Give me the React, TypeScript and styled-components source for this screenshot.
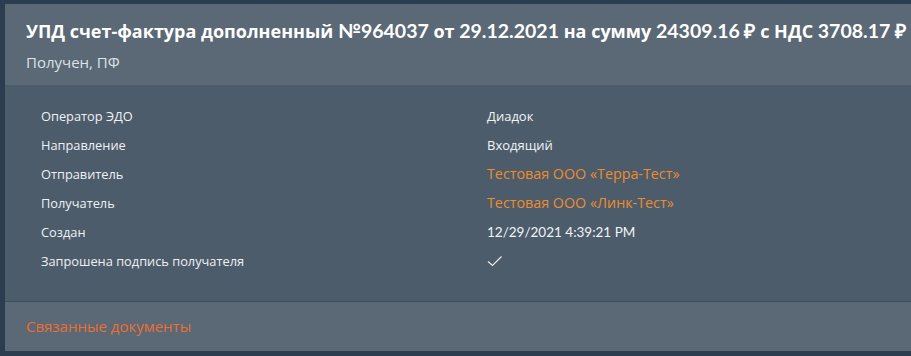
import React from "react";
import styled, { createGlobalStyle } from "styled-components";

const GlobalStyle = createGlobalStyle`
  html, body {
    margin: 0;
    padding: 0;
    background: #2c3d4f;
  }
  body {
    font-family: "Open Sans", "Noto Sans", sans-serif;
  }
`;

const Page = styled.div`
  padding: 4px 0 5px 5px;
  height: 356px;
  box-sizing: border-box;
`;

const Card = styled.div`
  display: flex;
  flex-direction: column;
  height: 100%;
`;

const Header = styled.div`
  background: #5b6876;
  padding: 15px 0 0 21px;
  height: 81px;
  box-sizing: border-box;
`;

const Title = styled.h1`
  margin: 0;
  font-size: 18px;
  font-weight: 700;
  line-height: 24px;
  color: #ffffff;
  white-space: nowrap;
`;

const Num = styled.span`
  font-family: Lato, sans-serif;
  font-weight: 700;
  font-size: 19.5px;
`;

const Subtitle = styled.div`
  margin-top: 10px;
  font-size: 15px;
  line-height: 18px;
  color: #dde2e7;
`;

const Body = styled.div`
  background: #4c5c6b;
  padding: 16px 0 0 36px;
  height: 217px;
  box-sizing: border-box;
  border-bottom: 1px solid #3e4c5a;
`;

const Grid = styled.div`
  display: grid;
  grid-template-columns: 446px 1fr;
  grid-auto-rows: 29px;
  align-items: center;
`;

const Label = styled.div`
  font-size: 12.8px;
  color: #eef1f4;
`;

const Value = styled.div<{ $link?: boolean; $latin?: boolean }>`
  font-size: ${(p) => (p.$link ? "14.3px" : p.$latin ? "13.5px" : "13px")};
  font-family: ${(p) => (p.$latin ? "Lato, sans-serif" : "inherit")};
  color: ${(p) => (p.$link ? "#f08b2a" : "#f1f4f7")};
`;

const Footer = styled.div`
  flex: 1;
  background: #5b6876;
  display: flex;
  align-items: center;
  padding-left: 21px;
`;

const FooterLink = styled.a`
  font-size: 15px;
  color: #ea6f30;
  text-decoration: none;
  margin-top: -1px;
`;

const Check = () => (
  <svg width="16" height="12" viewBox="0 0 16 12" style={{ display: "block" }}>
    <path d="M1 6.5 L5.5 10.5 L14.5 1.5" fill="none" stroke="#e8ecf0" strokeWidth="1.2" />
  </svg>
);

const rows: { label: string; value: React.ReactNode; link?: boolean; latin?: boolean }[] = [
  { label: "Оператор ЭДО", value: "Диадок" },
  { label: "Направление", value: "Входящий" },
  { label: "Отправитель", value: "Тестовая ООО «Терра-Тест»", link: true },
  { label: "Получатель", value: "Тестовая ООО «Линк-Тест»", link: true },
  { label: "Создан", value: "12/29/2021 4:39:21 PM", latin: true },
  { label: "Запрошена подпись получателя", value: <Check /> },
];

export default function App() {
  return (
    <Page>
      <GlobalStyle />
      <Card>
        <Header>
          <Title>
            УПД счет-фактура дополненный <Num>№964037</Num> от <Num>29.12.2021</Num> на сумму{" "}
            <Num>24309.16 ₽</Num> с НДС <Num>3708.17 ₽</Num>
          </Title>
          <Subtitle>Получен, ПФ</Subtitle>
        </Header>
        <Body>
          <Grid>
            {rows.map((r) => (
              <React.Fragment key={r.label}>
                <Label>{r.label}</Label>
                <Value $link={r.link} $latin={r.latin}>
                  {r.value}
                </Value>
              </React.Fragment>
            ))}
          </Grid>
        </Body>
        <Footer>
          <FooterLink href="#">Связанные документы</FooterLink>
        </Footer>
      </Card>
    </Page>
  );
}
